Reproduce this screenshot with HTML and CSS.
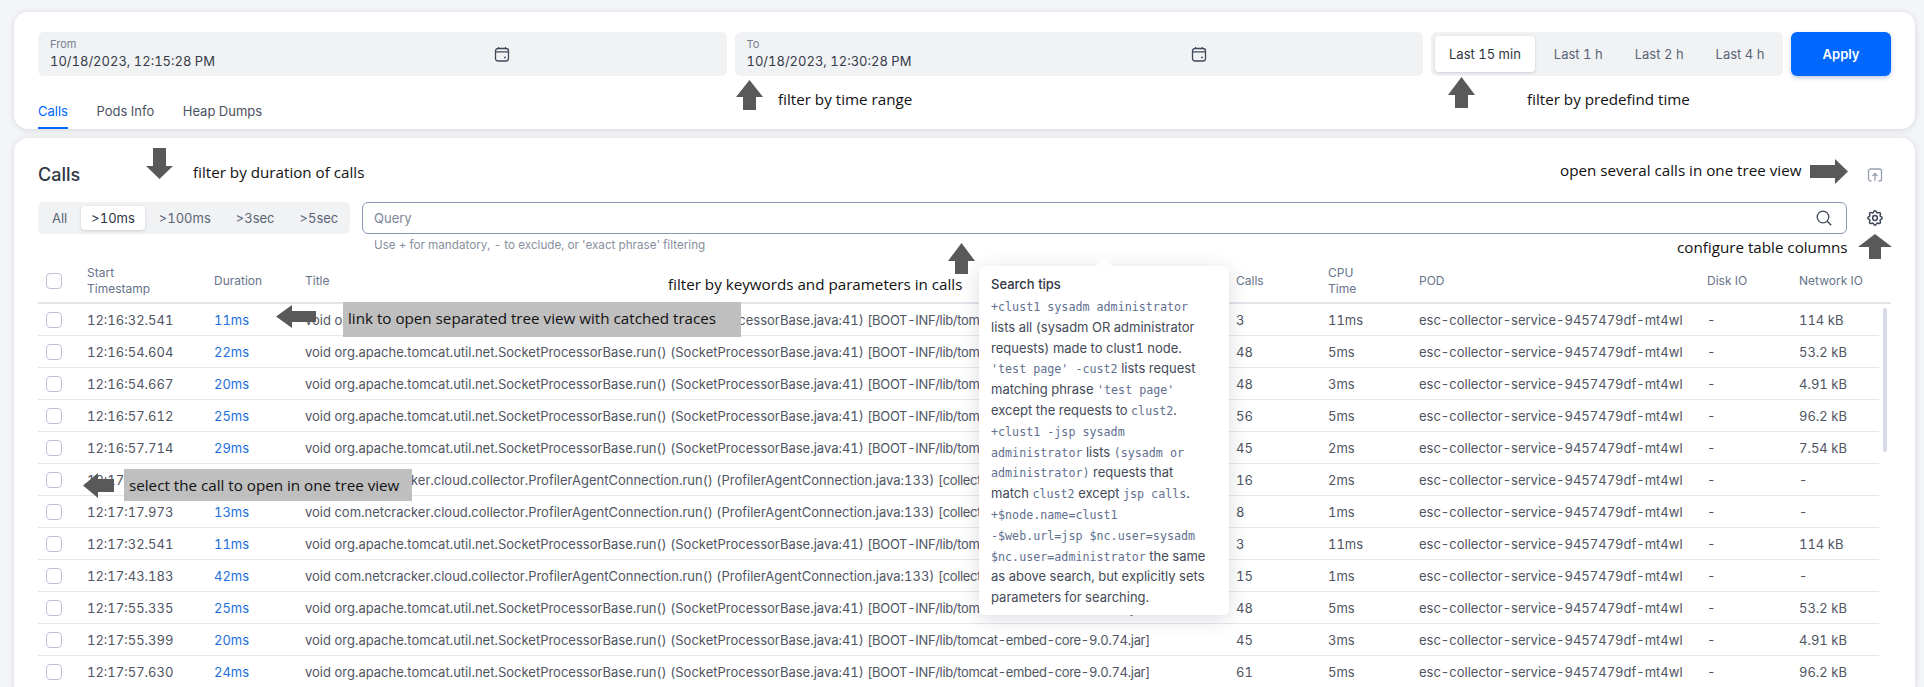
FILE: index.html
```html
<!DOCTYPE html>
<html lang="en">
<head>
  <meta charset="UTF-8">
  <meta name="viewport" content="width=device-width, initial-scale=1.0">
  <title>Calls</title>
  <link rel="stylesheet" href="styles.css">
</head>
<body>
  <section class="card top-card">
    <div class="range-row">
      <div class="date-field">
        <div class="date-text">
          <span class="date-label">From</span>
          <span class="date-value">10/18/2023, 12:15:28 PM</span>
        </div>
        <svg class="icon" viewBox="0 0 16 16"><path d="M4.5 1v2M11.5 1v2M1.5 5.8h13M4 2.5h8A2.5 2.5 0 0 1 14.5 5v7.5a2.5 2.5 0 0 1-2.5 2.5H4a2.5 2.5 0 0 1-2.5-2.5V5A2.5 2.5 0 0 1 4 2.5z"/><circle class="dot" cx="11" cy="11.5" r="0.9"/></svg>
      </div>
      <div class="date-field">
        <div class="date-text">
          <span class="date-label">To</span>
          <span class="date-value">10/18/2023, 12:30:28 PM</span>
        </div>
        <svg class="icon" viewBox="0 0 16 16"><path d="M4.5 1v2M11.5 1v2M1.5 5.8h13M4 2.5h8A2.5 2.5 0 0 1 14.5 5v7.5a2.5 2.5 0 0 1-2.5 2.5H4a2.5 2.5 0 0 1-2.5-2.5V5A2.5 2.5 0 0 1 4 2.5z"/><circle class="dot" cx="11" cy="11.5" r="0.9"/></svg>
      </div>
      <div class="segments time-segments">
        <span class="segment active">Last 15 min</span>
        <span class="segment">Last 1 h</span>
        <span class="segment">Last 2 h</span>
        <span class="segment">Last 4 h</span>
      </div>
      <button class="apply" type="button">Apply</button>
    </div>
    <nav class="tabs">
      <a class="tab active">Calls</a>
      <a class="tab">Pods Info</a>
      <a class="tab">Heap Dumps</a>
    </nav>
  </section>

  <section class="card calls-card">
    <div class="calls-head">
      <h2>Calls</h2>
      <svg class="icon upload" viewBox="0 0 16 14"><path d="M4.5 13h-1a2 2 0 0 1-2-2V3a2 2 0 0 1 2-2h9a2 2 0 0 1 2 2v8a2 2 0 0 1-2 2h-1M8 13V6M5.5 8 8 5.5 10.500 8"/></svg>
    </div>
    <div class="controls">
      <div class="segments duration-segments">
        <span class="segment">All</span>
        <span class="segment active">&gt;10ms</span>
        <span class="segment">&gt;100ms</span>
        <span class="segment">&gt;3sec</span>
        <span class="segment">&gt;5sec</span>
      </div>
      <div class="query">
        <span>Query</span>
        <svg class="icon search" viewBox="0 0 16 16"><circle cx="7" cy="7" r="5.8"/><path d="m11.2 11.2 4 4"/></svg>
      </div>
      <svg class="icon gear" viewBox="2 2 20 20"><circle cx="12" cy="12" r="3"/><path d="M10.325 4.317c.426-1.756 2.924-1.756 3.35 0a1.724 1.724 0 0 0 2.573 1.066c1.543-.94 3.31.826 2.37 2.37a1.724 1.724 0 0 0 1.065 2.572c1.756.426 1.756 2.924 0 3.35a1.724 1.724 0 0 0-1.066 2.573c.94 1.543-.826 3.31-2.37 2.37a1.724 1.724 0 0 0-2.572 1.065c-.426 1.756-2.924 1.756-3.35 0a1.724 1.724 0 0 0-2.573-1.066c-1.543.94-3.31-.826-2.37-2.37a1.724 1.724 0 0 0-1.065-2.572c-1.756-.426-1.756-2.924 0-3.35a1.724 1.724 0 0 0 1.066-2.573c-.94-1.543.826-3.31 2.37-2.37c1 .608 2.296.07 2.572-1.065z"/></svg>
    </div>
    <p class="hint">Use + for mandatory, - to exclude, or 'exact phrase' filtering</p>

    <div class="table-head grid">
      <span class="check"></span>
      <span>Start<br>Timestamp</span>
      <span>Duration</span>
      <span>Title</span>
      <span>Calls</span>
      <span>CPU<br>Time</span>
      <span>POD</span>
      <span>Disk IO</span>
      <span>Network IO</span>
    </div>
    <div class="table-body">
      <div class="rows">
        <div class="row grid"><span class="check"></span><span>12:16:32.541</span><a>11ms</a><span>void org.apache.tomcat.util.net.SocketProcessorBase.run() (SocketProcessorBase.java:41) <span class="jar">[BOOT-INF/lib/tomcat-embed-core-9.0.74.jar]</span></span><span>3</span><span>11ms</span><span>esc-collector-service-9457479df-mt4wl</span><span>-</span><span>114 kB</span></div>
        <div class="row grid"><span class="check"></span><span>12:16:54.604</span><a>22ms</a><span>void org.apache.tomcat.util.net.SocketProcessorBase.run() (SocketProcessorBase.java:41) <span class="jar">[BOOT-INF/lib/tomcat-embed-core-9.0.74.jar]</span></span><span>48</span><span>5ms</span><span>esc-collector-service-9457479df-mt4wl</span><span>-</span><span>53.2 kB</span></div>
        <div class="row grid"><span class="check"></span><span>12:16:54.667</span><a>20ms</a><span>void org.apache.tomcat.util.net.SocketProcessorBase.run() (SocketProcessorBase.java:41) <span class="jar">[BOOT-INF/lib/tomcat-embed-core-9.0.74.jar]</span></span><span>48</span><span>3ms</span><span>esc-collector-service-9457479df-mt4wl</span><span>-</span><span>4.91 kB</span></div>
        <div class="row grid"><span class="check"></span><span>12:16:57.612</span><a>25ms</a><span>void org.apache.tomcat.util.net.SocketProcessorBase.run() (SocketProcessorBase.java:41) <span class="jar">[BOOT-INF/lib/tomcat-embed-core-9.0.74.jar]</span></span><span>56</span><span>5ms</span><span>esc-collector-service-9457479df-mt4wl</span><span>-</span><span>96.2 kB</span></div>
        <div class="row grid"><span class="check"></span><span>12:16:57.714</span><a>29ms</a><span>void org.apache.tomcat.util.net.SocketProcessorBase.run() (SocketProcessorBase.java:41) <span class="jar">[BOOT-INF/lib/tomcat-embed-core-9.0.74.jar]</span></span><span>45</span><span>2ms</span><span>esc-collector-service-9457479df-mt4wl</span><span>-</span><span>7.54 kB</span></div>
        <div class="row grid"><span class="check"></span><span>12:17:02.117</span><a>17ms</a><span>void com.netcracker.cloud.collector.ProfilerAgentConnection.run() (ProfilerAgentConnection.java:133) <span class="jar">[collector-agent.jar]</span></span><span>16</span><span>2ms</span><span>esc-collector-service-9457479df-mt4wl</span><span>-</span><span>-</span></div>
        <div class="row grid"><span class="check"></span><span>12:17:17.973</span><a>13ms</a><span>void com.netcracker.cloud.collector.ProfilerAgentConnection.run() (ProfilerAgentConnection.java:133) <span class="jar">[collector-agent.jar]</span></span><span>8</span><span>1ms</span><span>esc-collector-service-9457479df-mt4wl</span><span>-</span><span>-</span></div>
        <div class="row grid"><span class="check"></span><span>12:17:32.541</span><a>11ms</a><span>void org.apache.tomcat.util.net.SocketProcessorBase.run() (SocketProcessorBase.java:41) <span class="jar">[BOOT-INF/lib/tomcat-embed-core-9.0.74.jar]</span></span><span>3</span><span>11ms</span><span>esc-collector-service-9457479df-mt4wl</span><span>-</span><span>114 kB</span></div>
        <div class="row grid"><span class="check"></span><span>12:17:43.183</span><a>42ms</a><span>void com.netcracker.cloud.collector.ProfilerAgentConnection.run() (ProfilerAgentConnection.java:133) <span class="jar">[collector-agent.jar]</span></span><span>15</span><span>1ms</span><span>esc-collector-service-9457479df-mt4wl</span><span>-</span><span>-</span></div>
        <div class="row grid"><span class="check"></span><span>12:17:55.335</span><a>25ms</a><span>void org.apache.tomcat.util.net.SocketProcessorBase.run() (SocketProcessorBase.java:41) <span class="jar">[BOOT-INF/lib/tomcat-embed-core-9.0.74.jar]</span></span><span>48</span><span>5ms</span><span>esc-collector-service-9457479df-mt4wl</span><span>-</span><span>53.2 kB</span></div>
        <div class="row grid"><span class="check"></span><span>12:17:55.399</span><a>20ms</a><span>void org.apache.tomcat.util.net.SocketProcessorBase.run() (SocketProcessorBase.java:41) <span class="jar">[BOOT-INF/lib/tomcat-embed-core-9.0.74.jar]</span></span><span>45</span><span>3ms</span><span>esc-collector-service-9457479df-mt4wl</span><span>-</span><span>4.91 kB</span></div>
        <div class="row grid"><span class="check"></span><span>12:17:57.630</span><a>24ms</a><span>void org.apache.tomcat.util.net.SocketProcessorBase.run() (SocketProcessorBase.java:41) <span class="jar">[BOOT-INF/lib/tomcat-embed-core-9.0.74.jar]</span></span><span>61</span><span>5ms</span><span>esc-collector-service-9457479df-mt4wl</span><span>-</span><span>96.2 kB</span></div>
      </div>
      <div class="scrollbar"></div>
    </div>
  </section>

  <aside class="tips">
    <h4>Search tips</h4>
    <p><code>+clust1 sysadm administrator</code> lists all (sysadm OR administrator requests) made to clust1 node. <code>'test page' -cust2</code> lists request matching phrase <code>'test page'</code> except the requests to <code>clust2</code>. <code>+clust1 -jsp sysadm administrator</code> lists <code>(sysadm or administrator)</code> requests that match <code>clust2</code> except <code>jsp calls</code>. <code>+$node.name=clust1 -$web.url=jsp $nc.user=sysadm $nc.user=administrator</code> the same as above search, but explicitly sets parameters for searching.</p>
  </aside>

  <!-- notes drawn over the screenshot -->
  <svg class="arrow down" viewBox="0 0 27 31"><path d="M7 0h13v18h7L13.5 31 0 18h7z"/></svg>
  <span class="note note-duration">filter by duration of calls</span>
  <svg class="arrow up-range" viewBox="0 0 27 30"><path d="M13.5 0 27 17h-7v13H7V17H0z"/></svg>
  <span class="note note-range">filter by time range</span>
  <svg class="arrow up-time" viewBox="0 0 27 31"><path d="M13.5 0 27 18h-7v13H7V18H0z"/></svg>
  <span class="note note-time">filter by predefind time</span>
  <svg class="arrow right-open" viewBox="0 0 38 25"><path d="M0 6h25V0l13 12.5L25 25v-6H0z"/></svg>
  <span class="note note-open">open several calls in one tree view</span>
  <svg class="arrow up-config" viewBox="0 0 34 25"><path d="M17 0 34 13H23v12H11V13H0z"/></svg>
  <span class="note note-config">configure table columns</span>
  <svg class="arrow up-keys" viewBox="0 0 27 31"><path d="M13.5 0 27 18h-7v13H7V18H0z"/></svg>
  <span class="note note-keys">filter by keywords and parameters in calls</span>
  <span class="note boxed note-link">link to open separated tree view with catched traces</span>
  <svg class="arrow left-link" viewBox="0 0 40 23"><path d="M40 6H16V0L0 11.5 16 23v-6h24z"/></svg>
  <span class="note boxed note-select">select the call to open in one tree view</span>
  <svg class="arrow left-select" viewBox="0 0 31 25"><path d="M31 6H15V0L0 12.5 15 25v-6h16z"/></svg>
</body>
</html>
```

FILE: styles.css
```css
*,
*::before,
*::after{
  box-sizing: border-box;
}
html, body{
  height: 100%;
  overflow: hidden;
}
body{
  margin: 0;
  padding: 12px 9px 0 14px;
  display: flex;
  flex-direction: column;
  gap: 9px;
  background-color: #f4f5f8;
  color: #3d4454;
  font-family: Inter, "Noto Sans", sans-serif;
  font-size: 13px;
  font-variant-numeric: tabular-nums;
}
.card{
  background: #fff;
  border-radius: 14px;
  box-shadow: 0 1px 6px rgba(30, 40, 60, 0.14);
  padding: 0 24px;
}
.top-card{
  height: 117px;
  padding-top: 20px;
}
.calls-card{
  flex: 1;
  min-height: 0;
  padding-top: 23px;
  border-radius: 14px 14px 0 0;
}

.range-row{
  display: flex;
  gap: 8px;
  height: 44px;
}
.date-field{
  flex: 1;
  display: flex;
  align-items: center;
  padding-left: 12px;
  background: #f1f2f4;
  border-radius: 6px;
}
.date-text{
  width: 444px;
  display: flex;
  flex-direction: column;
}
.date-label{
  font-size: 11px;
  line-height: 14px;
  color: #778092;
}
.date-value{
  line-height: 20px;
  color: #353c4a;
}
.icon{
  flex: none;
  width: 16px;
  height: 16px;
  fill: none;
  stroke: #3f4859;
  stroke-width: 1.3;
}
.icon .dot{
  fill: #3f4859;
  stroke: none;
}

.segments{
  display: flex;
  align-items: center;
  background: #f1f2f4;
  border-radius: 6px;
  color: #5a6578;
}
.segment{
  white-space: nowrap;
}
.segment.active{
  background: #fff;
  border-radius: 4px;
  color: #2f3542;
  box-shadow: 0 1px 3px rgba(30, 40, 60, 0.18);
}
.time-segments{
  width: 352px;
  padding: 4px;
  gap: 32px;
}
.time-segments .segment.active{
  height: 36px;
  line-height: 36px;
  padding: 0 14px;
  margin-right: -13px;
}
.apply{
  width: 100px;
  border: 0;
  border-radius: 6px;
  background: #0068ff;
  color: #fff;
  font: 600 13px Inter, sans-serif;
  box-shadow: 0 2px 4px rgba(0, 60, 160, 0.25);
}

.tabs{
  display: flex;
  gap: 28.5px;
  margin-top: 24px;
}
.tab{
  height: 29px;
  padding-top: 3px;
  line-height: 16px;
  color: #4b5261;
}
.tab.active{
  color: #0068ff;
  border-bottom: 2px solid #0068ff;
}

.calls-head{
  display: flex;
  align-items: center;
  justify-content: space-between;
  height: 27px;
  margin-bottom: 14px;
}
.calls-head h2{
  margin: 0;
  font-size: 18px;
  font-weight: 500;
  color: #2f3542;
}
.upload{
  height: 14px;
  margin-right: 8px;
  stroke: #98a1b0;
}
.controls{
  display: flex;
  align-items: center;
  gap: 12px;
  height: 32px;
}
.duration-segments{
  width: 312px;
  height: 32px;
  padding-left: 14px;
  gap: 25px;
}
.duration-segments .segment.active{
  padding: 0 10px;
  height: 24px;
  line-height: 24px;
  margin: 0 -11px;
}
.query{
  flex: 1;
  height: 32px;
  display: flex;
  align-items: center;
  justify-content: space-between;
  padding: 0 14px 0 11px;
  border: 1px solid #8a97b5;
  border-radius: 6px;
  color: #7d8698;
}
.gear{
  margin: 0 8px;
  stroke-width: 1.9;
}
.hint{
  margin: 3px 0 9px 336px;
  font-size: 11.7px;
  line-height: 16px;
  color: #8790a0;
}

.grid{
  display: grid;
  grid-template-columns: 49px 127px 91px 931px 92px 91px 288px 92px 80px;
  align-items: center;
}
.grid > *{
  white-space: nowrap;
}
.check{
  display: block;
  width: 16px;
  height: 16px;
  margin-left: 8px;
  border: 1px solid #bcc3d2;
  border-radius: 4px;
  background: #fff;
}
.table-head{
  height: 42px;
  padding-bottom: 2px;
  border-bottom: 2px solid #e1e4e9;
  font-size: 12px;
  line-height: 16px;
  color: #67748a;
}
.table-body{
  display: flex;
  align-items: flex-start;
}
.rows{
  width: 1841px;
}
.row{
  height: 32px;
  border-bottom: 1px solid #e4e7eb;
  color: #4f5562;
}
.row a{
  color: #1c6fdc;
}
.jar{
  letter-spacing: -0.33px;
}
.scrollbar{
  flex: none;
  width: 4px;
  height: 144px;
  margin: 4px 0 0 4px;
  border-radius: 2px;
  background: #d6dce6;
}

.tips{
  position: absolute;
  left: 979px;
  top: 266px;
  width: 250px;
  height: 349px;
  padding: 9px 18px 0 12px;
  background: #fff;
  border-radius: 6px;
  box-shadow: 0 4px 20px rgba(30, 40, 60, 0.16);
  color: #444a57;
}
.tips::before{
  content: "";
  position: absolute;
  left: 117px;
  top: -8px;
  border: 8px solid transparent;
  border-top: 0;
  border-bottom-color: #fff;
}
.tips h4{
  margin: 0 0 3px;
  font-size: 13px;
  line-height: 18px;
  font-weight: 500;
  color: #2f3542;
}
.tips p{
  margin: 0;
  line-height: 20.8px;
}
.tips code{
  font-family: "DejaVu Sans Mono", monospace;
  font-size: 11.7px;
  line-height: 1;
  color: #5f6f8f;
}

.arrow{
  position: absolute;
  fill: #595959;
}
.down{ left: 146px; top: 148px; width: 27px; height: 31px; }
.up-range{ left: 736px; top: 80px; width: 27px; height: 30px; }
.up-time{ left: 1448px; top: 77px; width: 27px; height: 31px; }
.right-open{ left: 1810px; top: 159px; width: 38px; height: 25px; }
.up-config{ left: 1858px; top: 234px; width: 34px; height: 25px; }
.up-keys{ left: 948px; top: 243px; width: 27px; height: 31px; }
.left-link{ left: 276px; top: 305px; width: 40px; height: 23px; }
.left-select{ left: 83px; top: 473px; width: 31px; height: 25px; }

.note{
  position: absolute;
  font-family: "Open Sans", sans-serif;
  font-size: 15.2px;
  line-height: 20px;
  color: #111;
  white-space: nowrap;
}
.note.boxed{
  background: #bfbfbf;
  padding: 0 5px;
}
.note-duration{ left: 193px; top: 162px; }
.note-range{ left: 778px; top: 89px; }
.note-time{ left: 1527px; top: 89px; }
.note-open{ left: 1560px; top: 160px; }
.note-config{ left: 1677px; top: 237px; }
.note-keys{ left: 668px; top: 274px; }
.note-link{ left: 343px; top: 302px; width: 398px; height: 35px; line-height: 33px; }
.note-select{ left: 124px; top: 469px; width: 288px; height: 32px; line-height: 33px; }
```
